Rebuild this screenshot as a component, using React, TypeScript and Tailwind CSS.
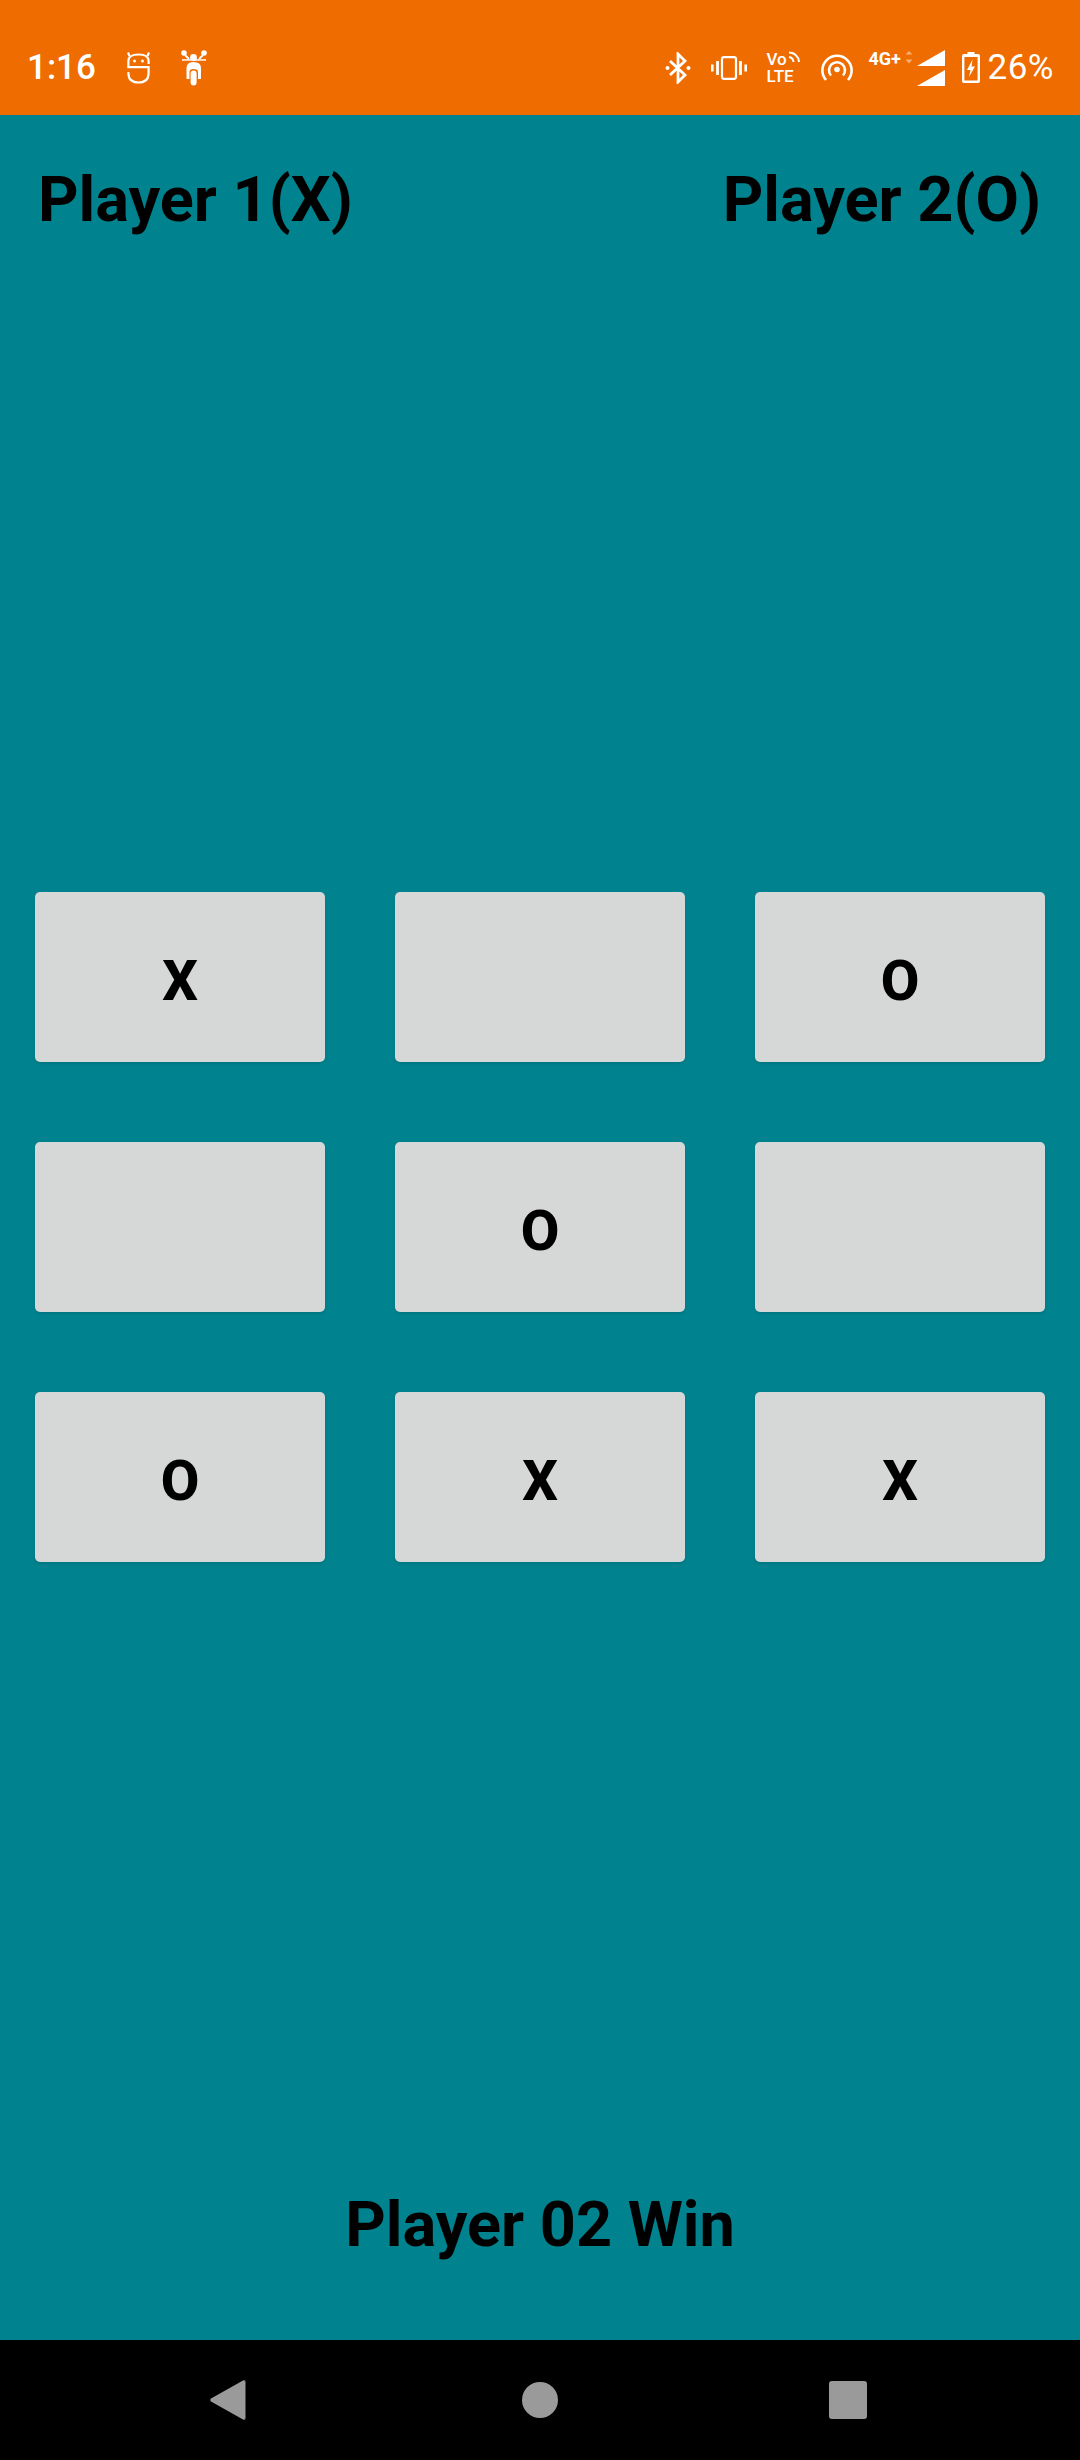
const cells = ["X", "", "O", "", "O", "", "O", "X", "X"];

const BikeIcon = () => (
  <svg width="26" height="36" viewBox="0 0 26 36" className="ml-[31px]" fill="white">
    <circle cx="3" cy="3" r="2.8" />
    <circle cx="23" cy="3" r="2.8" />
    <circle cx="12.5" cy="7.5" r="3.4" />
    <path d="M4 5 L8 9 M22 5 L18 9" stroke="white" strokeWidth="1.8" />
    <path d="M1 9.2 h24 v1.5 h-24z" />
    <path d="M5.5 29 V18 Q5.5 12 12.5 12 Q20 12 20 18 V29 H17 V22 Q17 19 12.5 19 Q8.5 19 8.5 22 V29z" />
    <rect x="9.6" y="20.5" width="6" height="15" rx="3" />
  </svg>
);

const RobotIcon = () => (
  <svg width="23" height="33" viewBox="0 0 23 33" className="ml-[31px]" fill="none" stroke="white" strokeWidth="2.2">
    <path d="M2.5 5 L1 1.5 M20.5 5 L22 1.5" />
    <path d="M21.6 13 V10 Q21.6 3.5 11.5 3.5 Q1.4 3.5 1.4 10 V16.2 H21.6 V22 Q21.6 31.5 11.5 31.5 Q1.4 31.5 1.4 22 V21" />
    <circle cx="7.5" cy="10" r="1.5" fill="white" stroke="none" />
    <circle cx="15.5" cy="10" r="1.5" fill="white" stroke="none" />
  </svg>
);

const StatusRight = () => (
  <div className="flex items-center text-white">
    <svg width="26" height="32" viewBox="0 0 26 32" fill="none" stroke="white" strokeWidth="2.8">
      <path d="M5 9 L20 23 L13 30 V2 L20 9 L5 23" />
      <circle cx="2.5" cy="16" r="2" fill="white" stroke="none" />
      <circle cx="23.5" cy="16" r="2" fill="white" stroke="none" />
    </svg>
    <svg width="36" height="24" viewBox="0 0 36 24" className="ml-[20px]" fill="none" stroke="white" strokeWidth="2.2">
      <rect x="11" y="1.2" width="14" height="21.6" rx="2" />
      <path d="M6.5 5 V19 M29.5 5 V19 M1.2 8.5 V15.5 M34.8 8.5 V15.5" strokeWidth="2.8" />
    </svg>
    {/* VoLTE */}
    <div className="ml-[20px] flex w-[35px] flex-col text-[17px] leading-[17px] font-medium">
      <div className="flex items-start">
        <span>Vo</span>
        <svg width="12" height="12" viewBox="0 0 12 12" className="ml-[1px]" fill="none" stroke="white" strokeWidth="2">
          <path d="M1 6 Q5 6.5 5.5 11 M1 1.5 Q10 2 11 11" />
        </svg>
      </div>
      <span>LTE</span>
    </div>
    <svg width="32" height="27" viewBox="0 0 32 27" className="ml-[19px]" fill="none" stroke="white" strokeWidth="2.6">
      <path d="M5 26 A14.6 14.6 0 1 1 27 26" />
      <path d="M10 21.5 A8 8 0 1 1 22 21.5" />
      <circle cx="16" cy="15.5" r="2.8" fill="white" stroke="none" />
    </svg>
    {/* 4G+ and signal */}
    <div className="ml-[16px] flex h-[36px] w-[76px] items-start">
      <span className="w-[36px] text-[18px] leading-[17px] font-bold">4G+</span>
      <svg width="8" height="14" viewBox="0 0 8 14" fill="white" opacity="0.45">
        <path d="M0.5 4.5 L4 1 L7.5 4.5z M0.5 9.5 L4 13.5 L7.5 9.5z" />
      </svg>
      <svg width="28" height="36" viewBox="0 0 28 36" className="ml-[4px]" fill="white">
        <path d="M0 16 L28 0 V16z M0 36 L28 20 V36z" />
      </svg>
    </div>
    <svg width="18" height="31" viewBox="0 0 18 31" className="ml-[17px]">
      <path d="M5.5 0 H12.5 V2 H16 Q18 2 18 4 V29 Q18 31 16 31 H2 Q0 31 0 29 V4 Q0 2 2 2 H5.5z M2.4 5 V28.6 H15.6 V5z" fill="white" />
      <path d="M10.5 7.5 L5 18 H8.5 L7 25 L13 14.5 H9.5z" fill="white" />
    </svg>
    <span className="ml-[8px] text-[35px] leading-none tracking-[0.5px]">26%</span>
  </div>
);

export default function App() {
  return (
    <div className="flex h-[2460px] w-[1080px] flex-col bg-[#00838f] font-['Roboto',sans-serif] text-black">
      {/* status bar */}
      <div className="flex h-[115px] items-center justify-between bg-[#ef6c00] pt-[20px] pr-[26px] pl-[27px]">
        <div className="flex items-center">
          <span className="text-[35px] leading-none font-medium text-white">1:16</span>
          <RobotIcon />
          <BikeIcon />
        </div>
        <StatusRight />
      </div>

      <div className="flex flex-1 flex-col">
        <div className="flex justify-between pt-[50px] pr-[39px] pl-[38px] text-[63px] leading-[70px] font-bold">
          <span>Player 1(X)</span>
          <span>Player 2(O)</span>
        </div>

        <div className="mt-[657px] grid grid-cols-[290px_290px_290px] justify-between gap-y-[80px] px-[35px]">
          {cells.map((c, i) => (
            <div
              key={i}
              className="flex h-[170px] items-center justify-center rounded-[5px] bg-[#d6d8d7] pt-[7px] text-[56px] leading-none font-extrabold shadow-[0_2px_3px_rgba(0,0,0,0.1)]"
            >
              {c}
            </div>
          ))}
        </div>

        <div className="mt-auto pb-[80px] text-center text-[63px] leading-[70px] font-bold">Player 02 Win</div>
      </div>

      {/* nav bar */}
      <div className="flex h-[120px] items-center bg-black pl-[210px]">
        <svg width="36" height="40" viewBox="0 0 36 40" fill="#9a9a9a">
          <path d="M33 0.5 Q35.5 -0.5 35.5 2 V38 Q35.5 40.5 33 39.5 L1 21.5 Q-0.5 20 1 18.5z" />
        </svg>
        <div className="ml-[276px] h-[36px] w-[36px] rounded-full bg-[#9a9a9a]" />
        <div className="ml-[271px] h-[38px] w-[38px] rounded-[3px] bg-[#9a9a9a]" />
      </div>
    </div>
  );
}
